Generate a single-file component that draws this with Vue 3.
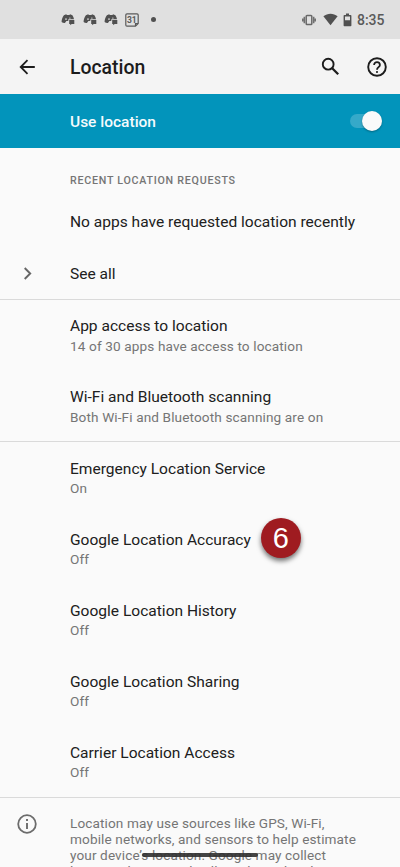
<script setup>
const access = [
  { title: 'App access to location', summary: '14 of 30 apps have access to location' },
  { title: 'Wi-Fi and Bluetooth scanning', summary: 'Both Wi-Fi and Bluetooth scanning are on' },
]
const services = [
  { title: 'Emergency Location Service', summary: 'On' },
  { title: 'Google Location Accuracy', summary: 'Off', step: 6 },
  { title: 'Google Location History', summary: 'Off' },
  { title: 'Google Location Sharing', summary: 'Off' },
  { title: 'Carrier Location Access', summary: 'Off' },
]
const footer = [
  'Location may use sources like GPS, Wi-Fi,',
  'mobile networks, and sensors to help estimate',
  'your device’s location. Google may collect',
  'location data periodically and use this data in',
]
</script>

<template>
  <div class="screen">
    <div class="status">
      <div class="notifications">
        <svg v-for="n in 3" :key="n" class="discord" viewBox="0 0 14 13">
          <path fill="#505050" fill-rule="evenodd" d="M2.900 2.200 5.200 1.300l.7.700h2.500l.7-.7 2.300.9c.9 1.200 1.400 2.500 1.600 4H7.300v1.900H5.400l-1.500 1.900C2.600 10.100 1.400 9.700.6 8.900.6 6.400 1.400 4.200 2.900 2.200ZM5 5.200a.8.9 0 1 0 0 1.800.8.9 0 0 0 0-1.800ZM8.900 4.400a.7.7 0 1 0 0 1.400.7.7 0 0 0 0-1.400Z" />
          <path fill="#505050" d="M8.200 7h5.100v3.900h-2.600l-1.500 1.300v-1.300h-1z" />
        </svg>
        <svg class="calendar" viewBox="0 0 14 14">
          <path fill="none" stroke="#5a5a5a" stroke-width="1.200" d="M2 .8h10q1.200 0 1.200 1.200v8.500l-2.700 2.700H2q-1.200 0-1.200-1.200V2Q.8.800 2 .8ZM10.500 13v-2.500H13" />
          <text x="6.700" y="9.700" text-anchor="middle">31</text>
        </svg>
        <i class="dot"></i>
      </div>
      <div class="system">
        <svg width="14" height="12" viewBox="0 0 14 12">
          <rect x="4.200" y="1.500" width="5.600" height="9" rx=".8" fill="none" stroke="#686868" stroke-width="1.500" />
          <path fill="none" stroke="#707070" stroke-width="1.500" d="M2.300 2.800v6.400M11.700 2.800v6.400M.7 4.400v3.200M13.300 4.400v3.200" />
        </svg>
        <svg class="wifi" width="15" height="13" viewBox="0 0 15 13">
          <path fill="#505050" d="M.4 3.200C4.600-.2 10.400-.2 14.600 3.200L7.500 12.300Z" />
        </svg>
        <svg class="battery" width="9" height="14" viewBox="0 0 9 14">
          <path fill="#505050" fill-rule="evenodd" d="M3 .5h3V2h1.600q.8 0 .8.800v9.600q0 .8-.8.800H1.400q-.8 0-.8-.8V2.800q0-.8.8-.8H3ZM2 3.400v3.900h5V3.400Z" />
        </svg>
        <span class="clock">8:35</span>
      </div>
    </div>

    <header class="bar">
      <svg class="back" width="18" height="18" viewBox="0 0 18 18">
        <path fill="none" stroke="#1c1c1c" stroke-width="1.800" d="M16.800 9H2.700M9.500 2.200 2.700 9l6.800 6.800" />
      </svg>
      <h1>Location</h1>
      <svg class="search" width="19" height="19" viewBox="0 0 19 19">
        <circle cx="7.200" cy="7.200" r="5.400" fill="none" stroke="#1c1c1c" stroke-width="1.900" />
        <path stroke="#1c1c1c" stroke-width="2.300" d="m11.200 11.200 6 6" />
      </svg>
      <svg width="20" height="20" viewBox="0 0 20 20">
        <circle cx="10" cy="10" r="8.800" fill="none" stroke="#1c1c1c" stroke-width="1.900" />
        <path fill="none" stroke="#1c1c1c" stroke-width="1.800" d="M7.100 8a2.900 2.900 0 1 1 5.800 0c0 2-2.900 2.300-2.900 4.700" />
        <circle cx="10" cy="15" r="1.050" fill="#1c1c1c" />
      </svg>
    </header>

    <div class="master">
      <span>Use location</span>
      <div class="switch"><i></i></div>
    </div>

    <section class="recent">
      <h2>RECENT LOCATION REQUESTS</h2>
      <div class="single"><span class="title">No apps have requested location recently</span></div>
      <div class="single">
        <svg class="chevron" width="10" height="14" viewBox="0 0 10 14">
          <path fill="none" stroke="#666" stroke-width="1.900" d="m1.700 1 5.500 5.500L1.700 12" />
        </svg>
        <span class="title">See all</span>
      </div>
    </section>

    <section v-for="(group, g) in [access, services]" :key="g" class="group">
      <div v-for="row in group" :key="row.title" class="row">
        <div class="line">
          <span class="title">{{ row.title }}</span>
          <b v-if="row.step" class="badge">{{ row.step }}</b>
        </div>
        <div class="summary">{{ row.summary }}</div>
      </div>
    </section>

    <section class="footer">
      <svg width="20" height="20" viewBox="0 0 20 20">
        <circle cx="10" cy="10" r="8.800" fill="none" stroke="#6c6c6c" stroke-width="1.800" />
        <path stroke="#6c6c6c" stroke-width="1.900" d="M10 9v6M10 5.100V7" />
      </svg>
      <div class="note"><p v-for="line in footer" :key="line">{{ line }}</p></div>
    </section>
    <div class="gesture"></div>
  </div>
</template>

<style>
body { margin: 0; overflow: hidden; }
</style>

<style scoped>
.screen {
  position: relative;
  width: 400px;
  height: 867px;
  overflow: hidden;
  display: flex;
  flex-direction: column;
  background: #fafafa;
  color: #202020;
  font-family: Roboto, "Liberation Sans", sans-serif;
}
.screen > * { flex-shrink: 0; }
svg { display: block; flex: none; }
.status {
  height: 39px;
  box-sizing: border-box;
  padding: 0 15.500px 0 61px;
  display: flex;
  justify-content: space-between;
  align-items: center;
  background: #e0e0e0;
}
.notifications, .system { display: flex; align-items: center; }
.discord { width: 14px; height: 13px; margin-right: 7.700px; }
.calendar { width: 14px; height: 14px; margin-left: -.7px; }
.calendar text { font-size: 8.500px; font-weight: 700; fill: #5a5a5a; letter-spacing: -.3px; }
.dot { width: 5px; height: 5px; border-radius: 50%; background: #505050; margin-left: 12px; }
.wifi { margin-left: 7px; }
.battery { margin-left: 5.500px; }
.clock { margin-left: 4.500px; font-size: 14px; line-height: 16px; font-weight: 500; color: #5a5a5a; padding-top: 1px; }
.bar {
  height: 55px;
  box-sizing: border-box;
  padding: 0 13.500px 0 18px;
  display: flex;
  align-items: center;
  background: #f4f4f4;
}
h1 { flex: 1; margin: 0 0 0 34px; padding-top: 2px; font-size: 19.400px; line-height: 24px; font-weight: 500; color: #1c1c1c; }
.search { margin-right: 27px; }
.master {
  height: 54px;
  box-sizing: border-box;
  padding: 0 18.500px 0 70px;
  display: flex;
  justify-content: space-between;
  align-items: center;
  background: #0294bb;
  color: #f5fbfd;
  font-size: 15.500px;
  line-height: 18px;
  font-weight: 500;
}
.master span { padding-top: 2px; }
.switch {
  width: 32px;
  height: 14px;
  border-radius: 7px;
  background: #35a9c9;
  display: flex;
  justify-content: flex-end;
  align-items: center;
}
.switch i { width: 20px; height: 20px; border-radius: 50%; background: #fafafa; box-shadow: 0 1px 2px rgba(0, 0, 0, .3); }
.recent { height: 151px; padding-top: 22px; box-sizing: border-box; }
h2 { margin: 0 0 5px 70px; font-size: 10.700px; line-height: 21px; font-weight: 500; letter-spacing: .74px; color: #757575; }
.single { height: 52px; display: flex; align-items: center; padding-left: 70px; }
.chevron { margin: 0 37px 0 -47px; }
.title { font-size: 15.560px; line-height: 20px; }
.group { border-top: 1px solid #dadada; }
.row { height: 71px; box-sizing: border-box; padding: 16px 0 0 70px; }
.group:nth-of-type(2) .row:last-child { height: 70px; }
.group:nth-of-type(3) .row { height: 71.100px; padding-top: 17px; }
.group:nth-of-type(3) .summary { margin-top: -1px; }
.line { display: flex; align-items: center; height: 20px; }
.badge {
  width: 40px;
  height: 40px;
  margin: -5px 0 0 10px;
  border-radius: 50%;
  background: #9f1b20;
  color: #fff;
  font: 400 29px/41px "Liberation Sans", sans-serif;
  text-align: center;
  box-shadow: 0 3px 5px rgba(0, 0, 0, .55);
}
.summary { font-size: 13.600px; line-height: 20px; letter-spacing: .12px; color: #757575; }
.footer { border-top: 1px solid #dadada; padding: 16px 0 0 17px; display: flex; align-items: flex-start; }
.note { margin-left: 33px; padding-top: 1px; font-size: 13.600px; line-height: 16px; letter-spacing: .11px; color: #757575; white-space: nowrap; }
.note p { margin: 0; }
.gesture { position: absolute; left: 142px; top: 853px; width: 116px; height: 4px; border-radius: 2px; background: #303030; opacity: .9; }
</style>
